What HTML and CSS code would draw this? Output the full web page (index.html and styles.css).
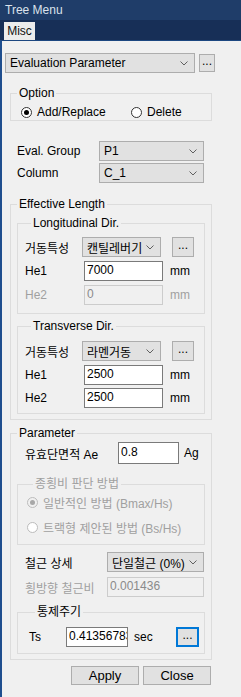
FILE: index.html
```html
<!DOCTYPE html>
<html lang="ko">
  <head>
    <meta charset="UTF-8" />
    <title>Tree Menu</title>
    <link rel="stylesheet" href="styles.css">
  </head>
  <body>
    <div class="titlebar">Tree Menu</div>
    <div class="tabbar"><div class="tab">Misc</div></div>

    <div class="panel">
      <div class="toprow">
        <div class="select wide"><span class="sel-text">Evaluation Parameter</span><svg class="arrow" width="8" height="5" viewBox="0 0 8 5"><polyline points="0.5,0.5 4,4 7.5,0.5" fill="none" stroke="#606060" /></svg></div>
        <button class="dots small">...</button>
      </div>

      <fieldset class="box outer option">
        <legend>Option</legend>
        <div class="radios">
          <label class="radio first"><span class="circle on"></span>Add/Replace</label>
          <label class="radio"><span class="circle"></span>Delete</label>
        </div>
      </fieldset>

      <div class="row eval-row">
        <span class="lbl w82">Eval. Group</span>
        <div class="select w105"><span class="sel-text">P1</span><svg class="arrow" width="8" height="5" viewBox="0 0 8 5"><polyline points="0.5,0.5 4,4 7.5,0.5" fill="none" stroke="#606060" /></svg></div>
      </div>
      <div class="row col-row">
        <span class="lbl w82">Column</span>
        <div class="select w105"><span class="sel-text">C_1</span><svg class="arrow" width="8" height="5" viewBox="0 0 8 5"><polyline points="0.5,0.5 4,4 7.5,0.5" fill="none" stroke="#606060" /></svg></div>
      </div>

      <fieldset class="box outer eff">
        <legend>Effective Length</legend>

        <fieldset class="box inner long">
          <legend>Longitudinal Dir.</legend>
          <div class="row r-type">
            <span class="lbl w57">거동특성</span>
            <div class="select w79"><span class="sel-text">캔틸레버기</span><svg class="arrow" width="8" height="5" viewBox="0 0 8 5"><polyline points="0.5,0.5 4,4 7.5,0.5" fill="none" stroke="#606060" /></svg></div>
            <button class="dots mid">...</button>
          </div>
          <div class="row r-he">
            <span class="lbl w59">He1</span>
            <input class="num w79" type="text" value="7000" />
            <span class="unit">mm</span>
          </div>
          <div class="row r-he disabled">
            <span class="lbl w59">He2</span>
            <input class="num w79" type="text" value="0" disabled />
            <span class="unit">mm</span>
          </div>
        </fieldset>

        <fieldset class="box inner trans">
          <legend>Transverse Dir.</legend>
          <div class="row r-type">
            <span class="lbl w57">거동특성</span>
            <div class="select w79"><span class="sel-text">라멘거동</span><svg class="arrow" width="8" height="5" viewBox="0 0 8 5"><polyline points="0.5,0.5 4,4 7.5,0.5" fill="none" stroke="#606060" /></svg></div>
            <button class="dots mid">...</button>
          </div>
          <div class="row r-he">
            <span class="lbl w59">He1</span>
            <input class="num w79" type="text" value="2500" />
            <span class="unit">mm</span>
          </div>
          <div class="row r-he2">
            <span class="lbl w59">He2</span>
            <input class="num w79" type="text" value="2500" />
            <span class="unit">mm</span>
          </div>
        </fieldset>
      </fieldset>

      <fieldset class="box outer param">
        <legend>Parameter</legend>
        <div class="row r-ae">
          <span class="lbl w93">유효단면적 Ae</span>
          <input class="num ae" type="text" value="0.8" />
          <span class="unit ag">Ag</span>
        </div>

        <fieldset class="box inner ratio disabled">
          <legend>종횡비 판단 방법</legend>
          <label class="radio r1"><span class="circle on"></span>일반적인 방법 (Bmax/Hs)</label>
          <label class="radio r2"><span class="circle"></span>트랙형 제안된 방법 (Bs/Hs)</label>
        </fieldset>

        <div class="row r-bar">
          <span class="lbl w82">철근 상세</span>
          <div class="select w97"><span class="sel-text">단일철근 (0%)</span><svg class="arrow" width="8" height="5" viewBox="0 0 8 5"><polyline points="0.5,0.5 4,4 7.5,0.5" fill="none" stroke="#606060" /></svg></div>
        </div>
        <div class="row r-ratio disabled">
          <span class="lbl w82">횡방향 철근비</span>
          <input class="num w97" type="text" value="0.001436" disabled />
        </div>

        <fieldset class="box inner period">
          <legend>통제주기</legend>
          <div class="row r-ts">
            <span class="lbl w37">Ts</span>
            <input class="num ts" type="text" value="0.41356783" />
            <span class="unit sec">sec</span>
            <button class="dots focus">...</button>
          </div>
        </fieldset>
      </fieldset>

      <div class="actions">
        <button class="btn">Apply</button>
        <button class="btn">Close</button>
      </div>
    </div>
  </body>
</html>
```

FILE: styles.css
```css
* {
  box-sizing: border-box;
}

body {
  margin: 0;
  width: 241px;
  height: 697px;
  overflow: hidden;
  background-color: #f0f0f0;
  font-family: "Liberation Sans", "Noto Sans CJK KR", sans-serif;
  font-size: 12px;
  color: #000;
}

.titlebar {
  height: 20px;
  line-height: 20px;
  padding-left: 5px;
  background-color: #1f3d69;
  color: #dbe2ec;
}

.tabbar {
  height: 20px;
  padding: 2px 0 0 4px;
  background-color: #172f57;
}

.tab {
  width: 31px;
  height: 18px;
  line-height: 18px;
  text-align: center;
  background-color: #ececec;
  color: #111;
}

.panel {
  height: 657px;
  border-top: 1px solid #1c4780;
  border-left: 2px solid #1f4e8e;
  padding-top: 12px;
}

/* generic controls */

.row {
  display: flex;
  align-items: center;
  height: 20px;
}

.lbl {
  flex: none;
  white-space: nowrap;
}

.w37 { width: 37px; }
.w57 { width: 57px; }
.w59 { width: 59px; }
.w82 { width: 82px; }
.w93 { width: 93px; }

.select {
  display: flex;
  align-items: center;
  height: 20px;
  padding: 0 6px 0 4px;
  background-color: #e1e1e1;
  border: 1px solid #adadad;
  flex: none;
}

.sel-text {
  flex: 1;
  overflow: hidden;
  white-space: nowrap;
}

.arrow {
  flex: none;
  margin-left: 3px;
}

.wide { width: 190px; }
.w79 { width: 79px; }
.w97 { width: 97px; }
.w105 { width: 105px; }

.num {
  flex: none;
  height: 20px;
  padding: 0 2px 3px;
  border: 1px solid #7a7a7a;
  background-color: #fff;
  font: inherit;
  color: #000;
  outline: none;
}

.num:disabled {
  border-color: #cccccc;
  background-color: #f0f0f0;
  color: #8a8a8a;
}

.disabled .lbl,
.disabled .unit,
.disabled legend,
.disabled .radio {
  color: #a0a0a0;
}

.unit {
  margin-left: 7px;
}

.dots {
  flex: none;
  padding: 0 0 4px;
  background-color: #e1e1e1;
  border: 1px solid #adadad;
  font: inherit;
  line-height: 10px;
}

.dots.small {
  width: 16px;
  height: 18px;
  margin-left: 4px;
}

.dots.mid {
  width: 22px;
  height: 20px;
  margin-left: 11px;
}

.dots.focus {
  width: 23px;
  height: 20px;
  margin-left: 6px;
  border: 2px solid #0078d7;
}

/* group boxes */

.box {
  margin: 0;
  padding: 0;
  min-width: 0;
  border: 1px solid #dcdcdc;
}

.box legend {
  margin-left: 6px;
  padding: 0 2px;
  line-height: 14px;
}

.outer {
  width: 202px;
  margin-left: 8px;
}

.inner {
  width: 188px;
  margin-left: 6px;
}

.toprow {
  display: flex;
  align-items: center;
  height: 20px;
  margin-left: 3px;
}

.option {
  margin-top: 13px;
}

.radios {
  display: flex;
  padding: 5px 0 1px 10px;
}

.radio {
  display: flex;
  align-items: center;
  height: 14px;
  white-space: nowrap;
}

.radio.first {
  width: 110px;
}

.circle {
  width: 11px;
  height: 11px;
  margin-right: 5px;
  border: 1px solid #333;
  border-radius: 50%;
  background-color: #fff;
  display: flex;
  align-items: center;
  justify-content: center;
}

.circle.on::after {
  content: "";
  width: 5px;
  height: 5px;
  border-radius: 50%;
  background-color: #000;
}

.disabled .circle {
  border-color: #bcbcbc;
}

.disabled .circle.on {
  background-color: #f0f0f0;
}

.disabled .circle.on::after {
  background-color: #a8a8a8;
}

.eval-row {
  margin: 20px 0 0 15px;
}

.col-row {
  margin: 2px 0 0 15px;
}

.eff {
  margin-top: 14px;
  padding-bottom: 5px;
}

.long {
  margin-top: 5px;
  padding: 0 0 8px 7px;
}

.trans {
  margin-top: 5px;
  padding: 0 0 5px 7px;
}

.r-type {
  margin-top: 7px;
}

.trans .r-type {
  margin-top: 8px;
}

.r-he {
  margin-top: 4px;
}

.r-he .num,
.r-he2 .num {
  margin-left: 2px;
}

.r-he .lbl,
.r-he2 .lbl {
  width: 57px;
}

.r-he2 {
  margin-top: 3px;
}

.param {
  margin-top: 6px;
  padding-bottom: 5px;
}

.r-ae {
  height: 22px;
  margin: 2px 0 0 14px;
}

.ae {
  width: 61px;
  height: 22px;
}

.ag {
  margin-left: 5px;
}

.ratio {
  margin-top: 13px;
  padding: 0 0 10px 9px;
}

.ratio .r1 {
  margin-top: 4px;
}

.ratio .r2 {
  margin-top: 11px;
}

.r-bar {
  margin: 7px 0 0 14px;
}

.r-ratio {
  margin: 5px 0 0 14px;
}

.period {
  margin-top: 8px;
  padding: 0 0 6px 11px;
}

.r-ts {
  margin-top: 8px;
}

.ts {
  width: 62px;
  padding-right: 0;
}

.sec {
  width: 36px;
  margin-left: 6px;
}

.actions {
  display: flex;
  gap: 4px;
  margin: 6px 0 0 69px;
}

.btn {
  width: 68px;
  height: 19px;
  padding: 0 0 1px;
  background-color: #e1e1e1;
  border: 1px solid #adadad;
  font: inherit;
  font-size: 13px;
}
```
